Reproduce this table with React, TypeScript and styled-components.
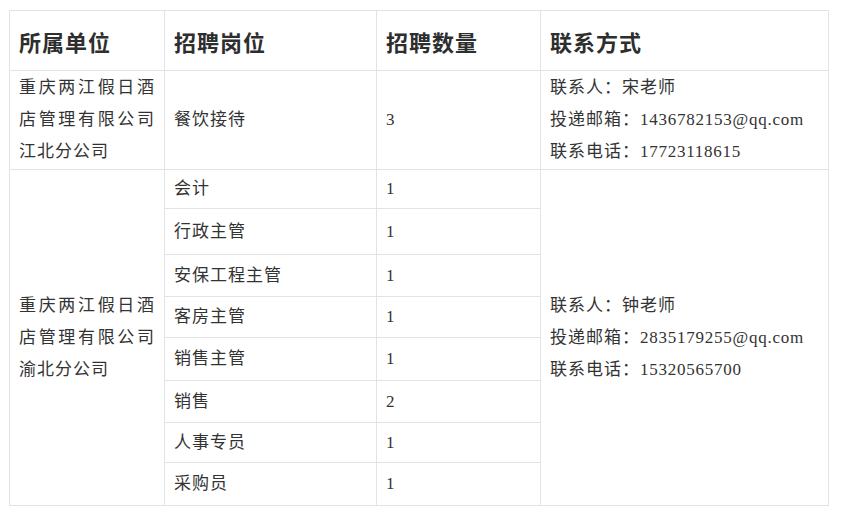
import styled, { createGlobalStyle } from "styled-components";

const GlobalStyle = createGlobalStyle`
    html, body {
        margin: 0;
        padding: 0;
        background: #ffffff;
    }
`;

/*outer page space around the table*/
const Page = styled.div`
    padding: 10px 0 0 9px;
`;

const Table = styled.table`
    width: 819px;
    border-collapse: collapse;
    table-layout: fixed;
    font-family: "Liberation Serif", "Noto Sans CJK SC", serif;
    color: #333333;
`;

const Row = styled.tr<{ $h: number }>`
    height: ${(p) => p.$h}px;
`;

/*header cells*/
const Th = styled.th`
    border: 1px solid #e3e3e3;
    padding: 0 9px;
    text-align: left;
    vertical-align: middle;
    font-family: "Noto Sans CJK SC", sans-serif;
    font-size: 22px;
    font-weight: 700;
    letter-spacing: 1px;
    color: #2e2e2e;
`;

const Td = styled.td<{ $justify?: boolean }>`
    border: 1px solid #e3e3e3;
    padding: 1px 9px;
    vertical-align: middle;
    font-size: 17px;
    line-height: 32px;
    letter-spacing: 1px;
    text-align: ${(p) => (p.$justify ? "justify" : "left")};
    text-align-last: left;
`;

/*digits and e-mail are in a serif face with tighter spacing*/
const Num = styled.span`
    letter-spacing: 0.75px;
`;

const Line = styled.div``;

type Job = { name: string; count: string; h: number };

const jobs: Job[] = [
    { name: "会计", count: "1", h: 39 },
    { name: "行政主管", count: "1", h: 46 },
    { name: "安保工程主管", count: "1", h: 42 },
    { name: "客房主管", count: "1", h: 41 },
    { name: "销售主管", count: "1", h: 43 },
    { name: "销售", count: "2", h: 42 },
    { name: "人事专员", count: "1", h: 40 },
    { name: "采购员", count: "1", h: 43 },
];

function Contact(props: { person: string; mail: string; phone: string }) {
    return (
        <>
            <Line>联系人：{props.person}</Line>
            <Line>投递邮箱：<Num>{props.mail}</Num></Line>
            <Line>联系电话：<Num>{props.phone}</Num></Line>
        </>
    );
}

export default function App() {
    return (
        <Page>
            <GlobalStyle />
            <Table>
                <colgroup>
                    <col style={{ width: 155 }} />
                    <col style={{ width: 212 }} />
                    <col style={{ width: 164 }} />
                    <col style={{ width: 288 }} />
                </colgroup>
                <thead>
                    <Row $h={60}>
                        <Th>所属单位</Th>
                        <Th>招聘岗位</Th>
                        <Th>招聘数量</Th>
                        <Th>联系方式</Th>
                    </Row>
                </thead>
                <tbody>
                    <Row $h={98}>
                        <Td $justify>重庆两江假日酒店管理有限公司江北分公司</Td>
                        <Td>餐饮接待</Td>
                        <Td><Num>3</Num></Td>
                        <Td>
                            <Contact person="宋老师" mail="1436782153@qq.com" phone="17723118615" />
                        </Td>
                    </Row>
                    {jobs.map((job, i) => (
                        <Row $h={job.h} key={job.name}>
                            {i === 0 && (
                                <Td $justify rowSpan={jobs.length}>
                                    重庆两江假日酒店管理有限公司渝北分公司
                                </Td>
                            )}
                            <Td>{job.name}</Td>
                            <Td><Num>{job.count}</Num></Td>
                            {i === 0 && (
                                <Td rowSpan={jobs.length}>
                                    <Contact person="钟老师" mail="2835179255@qq.com" phone="15320565700" />
                                </Td>
                            )}
                        </Row>
                    ))}
                </tbody>
            </Table>
        </Page>
    );
}
